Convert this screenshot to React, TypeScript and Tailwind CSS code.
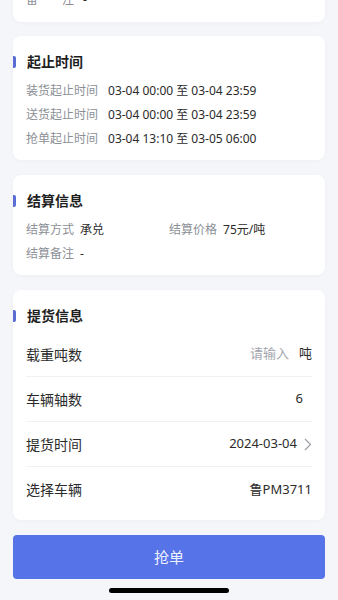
import React from "react";

const font = { fontFamily: '"Noto Sans", "Noto Sans CJK SC", sans-serif' };

function Title({ children }: { children: React.ReactNode }) {
  return (
    <div className="-ml-[13px] flex h-[20px] items-center">
      <span className="block h-[12px] w-[3px] rounded-r-[2px] bg-[#5a6dd4]" />
      <span className="ml-[11px] text-[14px] font-bold leading-[20px] text-[#1f1f1f]">{children}</span>
    </div>
  );
}

function InfoRow({ label, value }: { label: string; value: string }) {
  return (
    <div className="flex h-[24px] items-center text-[12px]">
      <span className="text-[#8c8f96]">{label}</span>
      <span className="ml-[10px] text-[#2b2b2b]">{value}</span>
    </div>
  );
}

function FormRow({ label, children, last }: { label: string; children: React.ReactNode; last?: boolean }) {
  return (
    <div className={`flex h-[45px] items-center justify-between ${last ? "" : "border-b border-[#f1f1f3]"}`}>
      <span className="text-[14px] text-[#2b2b2b]">{label}</span>
      <div className="flex items-center text-[13px] text-[#2b2b2b]">{children}</div>
    </div>
  );
}

export default function App() {
  return (
    <div style={font} className="h-[600px] w-[338px] overflow-hidden bg-[#f5f6fa]">
      <div className="flex flex-col px-[13px]">
        <div className="mt-[-28px] h-[50px] rounded-[8px] bg-white px-[13px] pt-[16px] shadow-[0_1px_4px_rgba(0,0,0,0.03)]">
          <div className="flex h-[24px] items-center text-[12px]">
            <span className="text-[#8c8f96]">备　　注</span>
            <span className="ml-[9px] text-[#2b2b2b]">-</span>
          </div>
        </div>

        <div className="mt-[14px] rounded-[8px] bg-white px-[13px] pb-[9px] pt-[16px] shadow-[0_1px_4px_rgba(0,0,0,0.03)]">
          <Title>起止时间</Title>
          <div className="mt-[7px]">
            <InfoRow label="装货起止时间" value="03-04 00:00 至 03-04 23:59" />
            <InfoRow label="送货起止时间" value="03-04 00:00 至 03-04 23:59" />
            <InfoRow label="抢单起止时间" value="03-04 13:10 至 03-05 06:00" />
          </div>
        </div>

        <div className="mt-[15px] rounded-[8px] bg-white px-[13px] pb-[9px] pt-[16px] shadow-[0_1px_4px_rgba(0,0,0,0.03)]">
          <Title>结算信息</Title>
          <div className="mt-[7px] grid grid-cols-2">
            <div className="flex h-[24px] items-center text-[12px]">
              <span className="text-[#8c8f96]">结算方式</span>
              <span className="ml-[6px] text-[#2b2b2b]">承兑</span>
            </div>
            <div className="flex h-[24px] items-center text-[12px]">
              <span className="text-[#8c8f96]">结算价格</span>
              <span className="ml-[6px] text-[#2b2b2b]">75元/吨</span>
            </div>
            <div className="flex h-[24px] items-center text-[12px]">
              <span className="text-[#8c8f96]">结算备注</span>
              <span className="ml-[6px] text-[#2b2b2b]">-</span>
            </div>
          </div>
        </div>

        <div className="mt-[15px] rounded-[8px] bg-white px-[13px] pb-[8px] pt-[16px] shadow-[0_1px_4px_rgba(0,0,0,0.03)]">
          <Title>提货信息</Title>
          <div className="mt-[6px]">
            <FormRow label="载重吨数">
              <span className="text-[#a3a6ad]">请输入</span>
              <span className="ml-[10px]">吨</span>
            </FormRow>
            <FormRow label="车辆轴数">
              <span className="pr-[9px]">6</span>
            </FormRow>
            <FormRow label="提货时间">
              <span>2024-03-04</span>
              <svg className="ml-[7px]" width="8" height="13" viewBox="0 0 8 13" fill="none">
                <path d="M1 1l5.5 5.5L1 12" stroke="#9a9ca3" strokeWidth="1.1" />
              </svg>
            </FormRow>
            <FormRow label="选择车辆" last>
              <span>鲁PM3711</span>
            </FormRow>
          </div>
        </div>

        <button className="mt-[15px] flex h-[44px] items-center justify-center rounded-[4px] bg-[#5673e8] text-[15px] text-[#eef1ff]">
          抢单
        </button>

        <div className="mt-[9px] flex justify-center">
          <div className="h-[5px] w-[120px] rounded-full bg-black" />
        </div>
      </div>
    </div>
  );
}
